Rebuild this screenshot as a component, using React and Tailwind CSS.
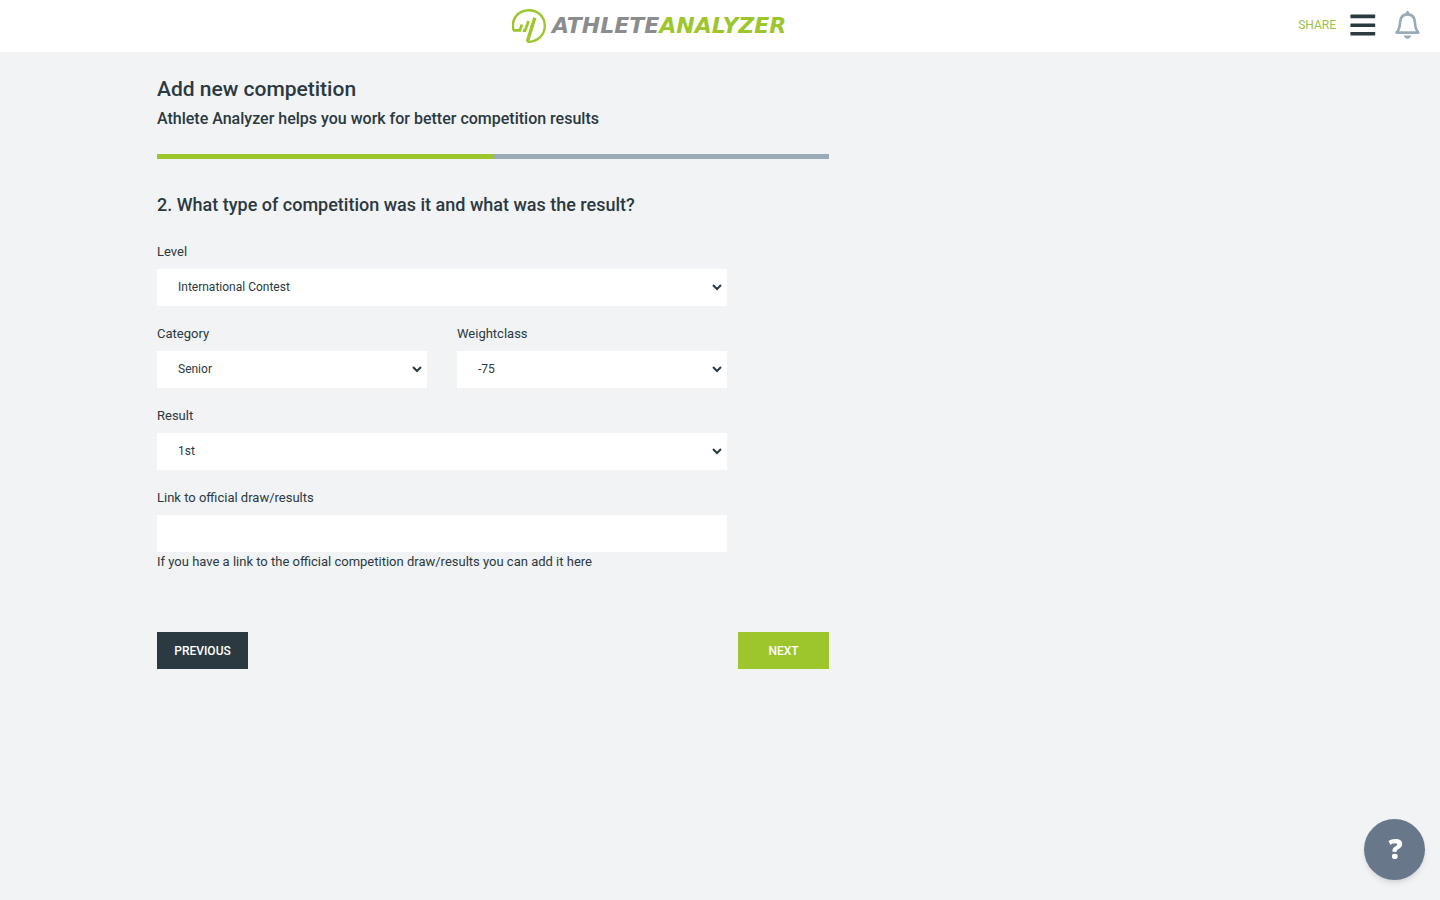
import { useState } from 'react'

const levels = ['International Contest', 'National Contest', 'Regional Contest', 'Local Contest']
const categories = ['Senior', 'Junior', 'Cadet']
const weightclasses = ['-75', '-81', '-90', '-100', '+100']
const results = ['1st', '2nd', '3rd', '5th', '7th']

export default function App() {
  const [form, setForm] = useState({
    level: 'International Contest',
    category: 'Senior',
    weightclass: '-75',
    result: '1st',
    link: '',
  })

  const update = (e) => setForm({ ...form, [e.target.name]: e.target.value })

  return (
    <div className="min-h-screen bg-[#f1f3f5] font-['Roboto',sans-serif] text-[#2b3940]">
      <Header />

      <main className="mx-auto max-w-[1126px] pt-6">
        <div className="max-w-[672px]">
          <h1 className="text-[21px] leading-[26px] font-medium">Add new competition</h1>
          <h2 className="mt-[5px] text-base leading-6 font-medium">
            Athlete Analyzer helps you work for better competition results
          </h2>

          <Progress step={1} total={2} />

          <form onSubmit={(e) => e.preventDefault()}>
            <h3 className="mt-8 text-lg leading-7 font-medium">
              2. What type of competition was it and what was the result?
            </h3>

            <div className="mt-[23px] flex max-w-[570px] flex-col gap-[18px]">
              <Select label="Level" name="level" value={form.level} options={levels} onChange={update} />
              <div className="grid grid-cols-2 gap-[30px]">
                <Select label="Category" name="category" value={form.category} options={categories} onChange={update} />
                <Select
                  label="Weightclass"
                  name="weightclass"
                  value={form.weightclass}
                  options={weightclasses}
                  onChange={update}
                />
              </div>
              <Select label="Result" name="result" value={form.result} options={results} onChange={update} />
              <div className="flex flex-col">
                <label htmlFor="link" className="mb-2 text-[13px] leading-[19px]">
                  Link to official draw/results
                </label>
                <input
                  id="link"
                  name="link"
                  type="text"
                  value={form.link}
                  onChange={update}
                  aria-describedby="link-help"
                  className="h-[37px] w-full bg-white px-[21px] text-xs outline-none"
                />
                <p id="link-help" className="text-[13px] leading-[19px]">
                  If you have a link to the official competition draw/results you can add it here
                </p>
              </div>
            </div>

            <div className="mt-[61px] flex justify-between">
              <button type="button" className="h-[37px] w-[91px] bg-[#2b3940] text-xs font-medium text-white">
                PREVIOUS
              </button>
              <button type="submit" className="h-[37px] w-[91px] bg-[#9dc62d] text-xs font-medium text-white">
                NEXT
              </button>
            </div>
          </form>
        </div>
      </main>

      <button
        type="button"
        aria-label="Help"
        className="fixed right-[15px] bottom-5 flex size-[61px] items-center justify-center rounded-full bg-[#69778b] pb-1 pl-0.5 font-['Open_Sans',sans-serif] text-[28px] leading-none font-extrabold text-white shadow-md"
      >
        ?
      </button>
    </div>
  )
}

function Header() {
  return (
    <header className="flex h-[52px] items-center bg-white">
      <div className="flex flex-1 justify-center">
        <a href="#" className="flex items-center gap-1.5">
          <LogoMark />
          <span className="font-['DejaVu_Sans',sans-serif] text-[22px] leading-none font-bold italic text-[#8a8c8e]">
            ATHLETE<span className="text-[#9dc62d]">ANALYZER</span>
          </span>
        </a>
      </div>
      <div className="flex items-center pr-5 pb-0.5">
        <a href="#" className="text-xs text-[#9bc04b]">
          SHARE
        </a>
        <button type="button" aria-label="Menu" className="ml-[14px]">
          <svg width="26" height="24" viewBox="0 0 26 24" fill="#2b3940">
            <rect x="0.4" y="1.6" width="24.8" height="3.6" rx="0.6" />
            <rect x="0.4" y="10.4" width="24.8" height="3.6" rx="0.6" />
            <rect x="0.4" y="19" width="24.8" height="3.6" rx="0.6" />
          </svg>
        </button>
        <button type="button" aria-label="Notifications" className="ml-[19px]">
          <BellIcon />
        </button>
      </div>
    </header>
  )
}

function LogoMark() {
  return (
    <svg width="34" height="34" viewBox="0 0 34 34" fill="none" stroke="#9dc62d">
      {/* open ring that runs into the tall bar */}
      <path d="M1.7 21.5C-1.6 11 5.5 1.2 17 1.2c9 0 15.8 6.8 15.8 15.6 0 9.2-7.2 16-17.6 16.1" strokeWidth="2.4" />
      <path d="M1 21.4h6.8l2.2-6" strokeWidth="2.8" />
      <path d="M10.8 21.6h2.2l3.6-9.6" strokeWidth="2.8" />
      <path d="M22.8 8.8L15.4 32.6" strokeWidth="3.4" />
    </svg>
  )
}

function BellIcon() {
  return (
    <svg width="25" height="28" viewBox="0 0 25 28" fill="none">
      <path
        d="M12.5 3.4C7.8 3.4 5.4 6.8 5.1 11.2 4.8 16.6 4.2 18.8 1.6 21.6h21.8c-2.6-2.8-3.2-5-3.5-10.4-.3-4.4-2.7-7.8-7.4-7.8z"
        stroke="#98abb7"
        strokeWidth="2.6"
        strokeLinejoin="round"
      />
      <path d="M10.7 3.6V1.8a1.8 1.8 0 0 1 3.6 0v1.8z" fill="#98abb7" />
      <path d="M8.8 24.6h7.4c-.4 2-1.8 3.2-3.7 3.2s-3.3-1.2-3.7-3.2z" fill="#98abb7" />
    </svg>
  )
}

function Progress({ step, total }) {
  return (
    <div className="mt-[23px] h-[5px] w-full bg-[#98abb7]">
      <div className="h-full bg-[#9dc62d]" style={{ width: `${(step / total) * 100}%` }} />
    </div>
  )
}

function Select({ label, name, value, options, onChange }) {
  return (
    <div className="flex flex-col">
      <label htmlFor={name} className="mb-2 text-[13px] leading-[19px]">
        {label}
      </label>
      <select
        id={name}
        name={name}
        value={value}
        onChange={onChange}
        className="h-[37px] w-full border-r-2 border-white bg-white pb-0.5 pl-[17px] text-xs outline-none"
      >
        {options.map((option) => (
          <option key={option}>{option}</option>
        ))}
      </select>
    </div>
  )
}
